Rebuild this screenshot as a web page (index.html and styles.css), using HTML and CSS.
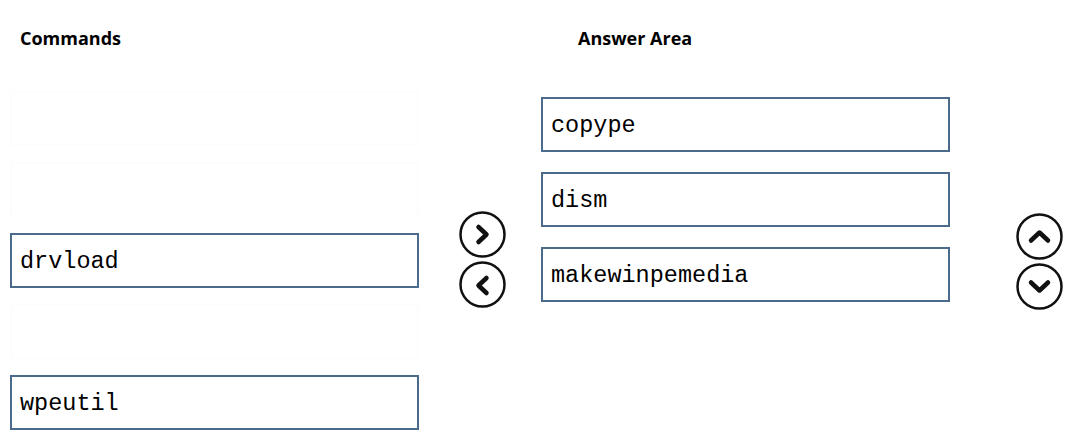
FILE: index.html
```html
<!DOCTYPE html>
<html>
<head>
    <title>Commands</title>
    <link rel="stylesheet" href="styles.css">
</head>
<body>
    <div class="page">
        <section class="column commands">
            <h2>Commands</h2>
            <div class="slots">
                <div class="slot empty"></div>
                <div class="slot empty"></div>
                <div class="slot">drvload</div>
                <div class="slot empty"></div>
                <div class="slot">wpeutil</div>
            </div>
        </section>

        <div class="movers transfer">
            <button class="round-button" title="Move right">
                <svg viewBox="0 0 47 47" width="47" height="47"><circle cx="23.5" cy="23.5" r="22"/><polyline points="19.5,16 27.5,23.5 19.5,31"/></svg>
            </button>
            <button class="round-button" title="Move left">
                <svg viewBox="0 0 47 47" width="47" height="47"><circle cx="23.5" cy="23.5" r="22"/><polyline points="27.5,17 19.5,24.5 27.5,32"/></svg>
            </button>
        </div>

        <section class="column answer">
            <h2>Answer Area</h2>
            <div class="slots">
                <div class="slot">copype</div>
                <div class="slot">dism</div>
                <div class="slot">makewinpemedia</div>
            </div>
        </section>

        <div class="movers order">
            <button class="round-button" title="Move up">
                <svg viewBox="0 0 47 47" width="47" height="47"><circle cx="23.5" cy="23.5" r="22"/><polyline points="15,27.5 23.5,19.5 32,27.5"/></svg>
            </button>
            <button class="round-button" title="Move down">
                <svg viewBox="0 0 47 47" width="47" height="47"><circle cx="23.5" cy="23.5" r="22"/><polyline points="15,19.5 23.5,27.5 32,19.5"/></svg>
            </button>
        </div>
    </div>
</body>
</html>
```

FILE: styles.css
```css
body {
    margin: 0;
    background: #fff;
    color: #000;
    font-family: 'Open Sans', 'Noto Sans', sans-serif;
}

.page {
    display: flex;
    align-items: flex-start;
    padding-left: 10px;
}

.column {
    width: 409px;
}

h2 {
    font-size: 18px;
    font-weight: 700;
    line-height: 24px;
    margin: 26px 0 0;
}

.commands h2 {
    padding-left: 10px;
}

.answer h2 {
    padding-left: 37px;
}

.slots {
    display: flex;
    flex-direction: column;
}

.commands .slots {
    margin-top: 41px;
    gap: 16px;
}

.answer .slots {
    margin-top: 47px;
    gap: 20px;
}

.slot {
    box-sizing: border-box;
    height: 55px;
    display: flex;
    align-items: center;
    padding: 1px 0 0 8px;
    border: 2px solid #4a6b8c;
    font-family: 'Liberation Mono', 'Courier New', monospace;
    font-size: 23.5px;
}

.slot.empty {
    border-color: #fdfdfd;
}

.movers {
    display: flex;
    flex-direction: column;
    gap: 3px;
}

.transfer {
    margin: 211px 35px 0 40px;
}

.order {
    margin: 213px 0 0 66px;
}

.round-button {
    padding: 0;
    border: none;
    background: none;
    cursor: pointer;
    width: 47px;
    height: 47px;
}

.round-button svg {
    display: block;
    fill: none;
    stroke: #111;
}

.round-button circle {
    stroke-width: 2.5;
}

.round-button polyline {
    stroke-width: 4.5;
    stroke-linecap: round;
    stroke-linejoin: round;
}
```
